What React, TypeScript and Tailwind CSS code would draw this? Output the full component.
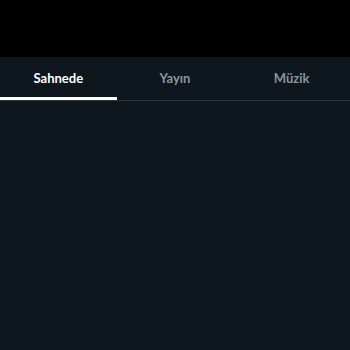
import React from "react";

export default function App() {
  const tabs = ["Sahnede", "Yayın", "Müzik"];
  return (
    <div className="w-[350px] h-[350px] bg-[#0f171e] flex flex-col" style={{ fontFamily: "Lato, 'Noto Sans', sans-serif" }}>
      <div className="h-[57px] bg-black" />
      <div className="flex border-b border-[#2c343b]">
        {tabs.map((t, i) => (
          <div key={t} className="flex-1 relative h-[43px] flex items-center justify-center pt-[1px]">
            <span className={i === 0 ? "text-[13px] font-bold text-white" : "text-[13px] font-bold text-[#8a949b]"}>{t}</span>
            {i === 0 && <div className="absolute left-0 right-0 bottom-0 h-[3px] bg-white" />}
          </div>
        ))}
      </div>
    </div>
  );
}
